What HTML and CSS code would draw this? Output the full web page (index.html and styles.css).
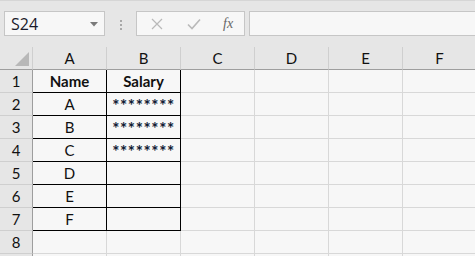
FILE: index.html
```
<!DOCTYPE html>
<html>
<head>
<meta charset="utf-8">
<link rel="stylesheet" href="styles.css">
</head>
<body>
<div class="toolbar">
  <div class="namebox">
    <span class="name">S24</span>
    <svg class="caret" width="8" height="5" viewBox="0 0 8 5"><path d="M0 0h8L4 4.5z" fill="#7a7a7a"/></svg>
  </div>
  <div class="dots"><i></i><i></i><i></i></div>
  <div class="fbuttons">
    <svg class="ico" width="12" height="12" viewBox="0 0 12 12"><path d="M1 1L11 11M11 1L1 11" stroke="#b9b9b9" stroke-width="1.2" fill="none"/></svg>
    <svg class="ico" width="14" height="12" viewBox="0 0 14 12"><path d="M1 6.5L5 10.5L13 1.5" stroke="#b9b9b9" stroke-width="1.6" fill="none"/></svg>
    <span class="fx">fx</span>
  </div>
  <div class="fbar"></div>
</div>
<div class="sheet">
  <div class="hd corner"><span class="tri"></span></div>
  <div class="hd col">A</div>
  <div class="hd col">B</div>
  <div class="hd col">C</div>
  <div class="hd col">D</div>
  <div class="hd col">E</div>
  <div class="hd col">F</div>

  <div class="hd row">1</div>
  <div class="c t b">Name</div>
  <div class="c t b">Salary</div>
  <div class="c"></div><div class="c"></div><div class="c"></div><div class="c"></div>

  <div class="hd row">2</div>
  <div class="c t">A</div>
  <div class="c t stars">********</div>
  <div class="c"></div><div class="c"></div><div class="c"></div><div class="c"></div>

  <div class="hd row">3</div>
  <div class="c t">B</div>
  <div class="c t stars">********</div>
  <div class="c"></div><div class="c"></div><div class="c"></div><div class="c"></div>

  <div class="hd row">4</div>
  <div class="c t">C</div>
  <div class="c t stars">********</div>
  <div class="c"></div><div class="c"></div><div class="c"></div><div class="c"></div>

  <div class="hd row">5</div>
  <div class="c t">D</div>
  <div class="c t"></div>
  <div class="c"></div><div class="c"></div><div class="c"></div><div class="c"></div>

  <div class="hd row">6</div>
  <div class="c t">E</div>
  <div class="c t"></div>
  <div class="c"></div><div class="c"></div><div class="c"></div><div class="c"></div>

  <div class="hd row">7</div>
  <div class="c t">F</div>
  <div class="c t"></div>
  <div class="c"></div><div class="c"></div><div class="c"></div><div class="c"></div>

  <div class="hd row">8</div>
  <div class="c"></div><div class="c"></div><div class="c"></div><div class="c"></div><div class="c"></div><div class="c"></div>

  <div class="hd row"></div>
  <div class="c"></div><div class="c"></div><div class="c"></div><div class="c"></div><div class="c"></div><div class="c"></div>
</div>
</body>
</html>
```
FILE: styles.css
```
html, body {
  margin: 0;
  padding: 0;
  background: #e6e6e6;
  overflow: hidden;
  width: 475px;
  height: 256px;
}
body {
  font-family: "Lato", "Liberation Sans", sans-serif;
}
.toolbar {
  height: 47px;
  display: flex;
  align-items: flex-start;
  padding-top: 11px;
  padding-left: 4px;
  box-sizing: border-box;
  border-top: 1px solid #d6d6d6;
}
.namebox {
  width: 101px;
  height: 25px;
  margin-top: -1px;
  box-sizing: border-box;
  border: 1px solid #c6c6c6;
  background: #f7f7f7;
  display: flex;
  align-items: center;
  justify-content: space-between;
  padding: 0 6px 0 6px;
}
.name {
  font-family: "Open Sans", "Noto Sans", sans-serif;
  font-size: 16px;
  color: #1a1a2a;
}
.caret { margin-top: 1px; }
.dots {
  width: 31px;
  display: flex;
  flex-direction: column;
  align-items: center;
  gap: 2px;
  padding-top: 8px;
}
.dots i {
  width: 2px;
  height: 2px;
  background: #a8a8a8;
  display: block;
}
.fbuttons {
  width: 109px;
  height: 25px;
  margin-top: -1px;
  box-sizing: border-box;
  border: 1px solid #c6c6c6;
  background: #f7f7f7;
  display: flex;
  align-items: center;
  padding-left: 14px;
  gap: 24px;
}
.fx {
  font-family: "Liberation Serif", serif;
  font-style: italic;
  font-size: 14px;
  color: #666;
  margin-left: -2px;
}
.fbar {
  margin-left: 4px;
  flex: 1;
  height: 25px;
  margin-top: -1px;
  box-sizing: border-box;
  border: 1px solid #c6c6c6;
  border-right: none;
  background: #f7f7f7;
}
.sheet {
  display: grid;
  grid-template-columns: 33px repeat(6, 74px);
  grid-auto-rows: 23px;
}
.sheet > div {
  box-sizing: border-box;
  display: flex;
  align-items: center;
  justify-content: center;
  font-size: 15px;
  color: #111;
}
.hd {
  background: #e6e6e6;
}
.col {
  border-right: 1px solid #cfcfcf;
  border-bottom: 1px solid #9e9e9e;
}
.corner {
  border-right: 1px solid #cfcfcf;
  border-bottom: 1px solid #9e9e9e;
  position: relative;
}
.tri {
  position: absolute;
  right: 3px;
  bottom: 3px;
  width: 0;
  height: 0;
  border-left: 14px solid transparent;
  border-bottom: 14px solid #b8b8b8;
}
.row {
  border-right: 1px solid #9e9e9e;
  border-bottom: 1px solid #cfcfcf;
}
.c {
  background: #f7f7f7;
  border-right: 1px solid #d8d8d8;
  border-bottom: 1px solid #d8d8d8;
}
.c.t {
  border-right: 1px solid #000;
  border-bottom: 1px solid #000;
}
.b { font-weight: bold; }
.sheet > .stars {
  font-weight: bold;
  font-size: 17px;
  letter-spacing: 0.6px;
  color: #0f1a33;
  padding-top: 3px;
}
```
